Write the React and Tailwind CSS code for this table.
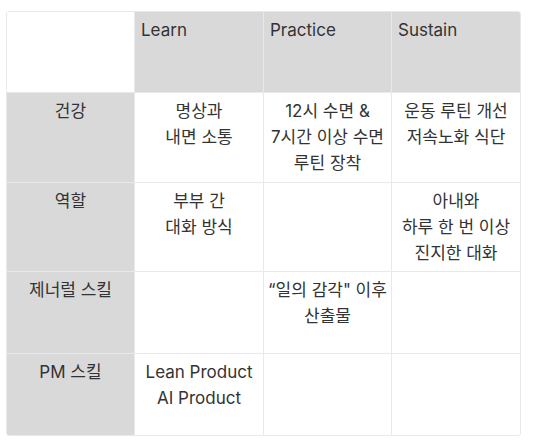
const columns = ['Learn', 'Practice', 'Sustain']

const rows = [
  { label: '건강', cells: [['명상과', '내면 소통'], ['12시 수면 &', '7시간 이상 수면', '루틴 장착'], ['운동 루틴 개선', '저속노화 식단']], h: 'h-[90px]' },
  { label: '역할', cells: [['부부 간', '대화 방식'], [], ['아내와', '하루 한 번 이상', '진지한 대화']], h: 'h-[89px]' },
  { label: '제너럴 스킬', cells: [[], ['“일의 감각" 이후', '산출물'], []], h: 'h-[82px]' },
  { label: 'PM 스킬', cells: [['Lean Product', 'AI Product'], [], []], h: 'h-[81px]' },
]

export default function App() {
  return (
    <div className="min-h-[441px] bg-white pt-[11px] pl-[6px] font-['Inter','Noto_Sans_CJK_KR',sans-serif] text-[17px] leading-[26px] text-[#333333]">
      <div className="w-[515px] overflow-hidden rounded-[3px] border border-[#e9e9e7]">
        <div className="grid grid-cols-[128px_129px_128px_128px]">
          <div className="h-[81px] border-r border-b border-[#e9e9e7] bg-white" />
          {columns.map((c, i) => (
            <div
              key={c}
              className={`h-[81px] border-b border-[#e9e9e7] bg-[#d9d9d9] px-[6px] pt-[5px] ${i < 2 ? 'border-r' : ''}`}
            >
              {c}
            </div>
          ))}
          {rows.map((r, ri) => (
            <Row key={r.label} row={r} last={ri === rows.length - 1} />
          ))}
        </div>
      </div>
    </div>
  )
}

const Row = ({ row, last }) => (
  <>
    <div className={`${row.h} border-r border-[#e9e9e7] bg-[#d9d9d9] px-[6px] pt-[5px] text-center ${last ? '' : 'border-b'}`}>
      {row.label}
    </div>
    {row.cells.map((lines, i) => (
      <div
        key={i}
        className={`${row.h} border-[#e9e9e7] px-[2px] pt-[5px] text-center whitespace-nowrap ${i < 2 ? 'border-r' : ''} ${last ? '' : 'border-b'}`}
      >
        {lines.map((l) => (
          <div key={l}>{l}</div>
        ))}
      </div>
    ))}
  </>
)
